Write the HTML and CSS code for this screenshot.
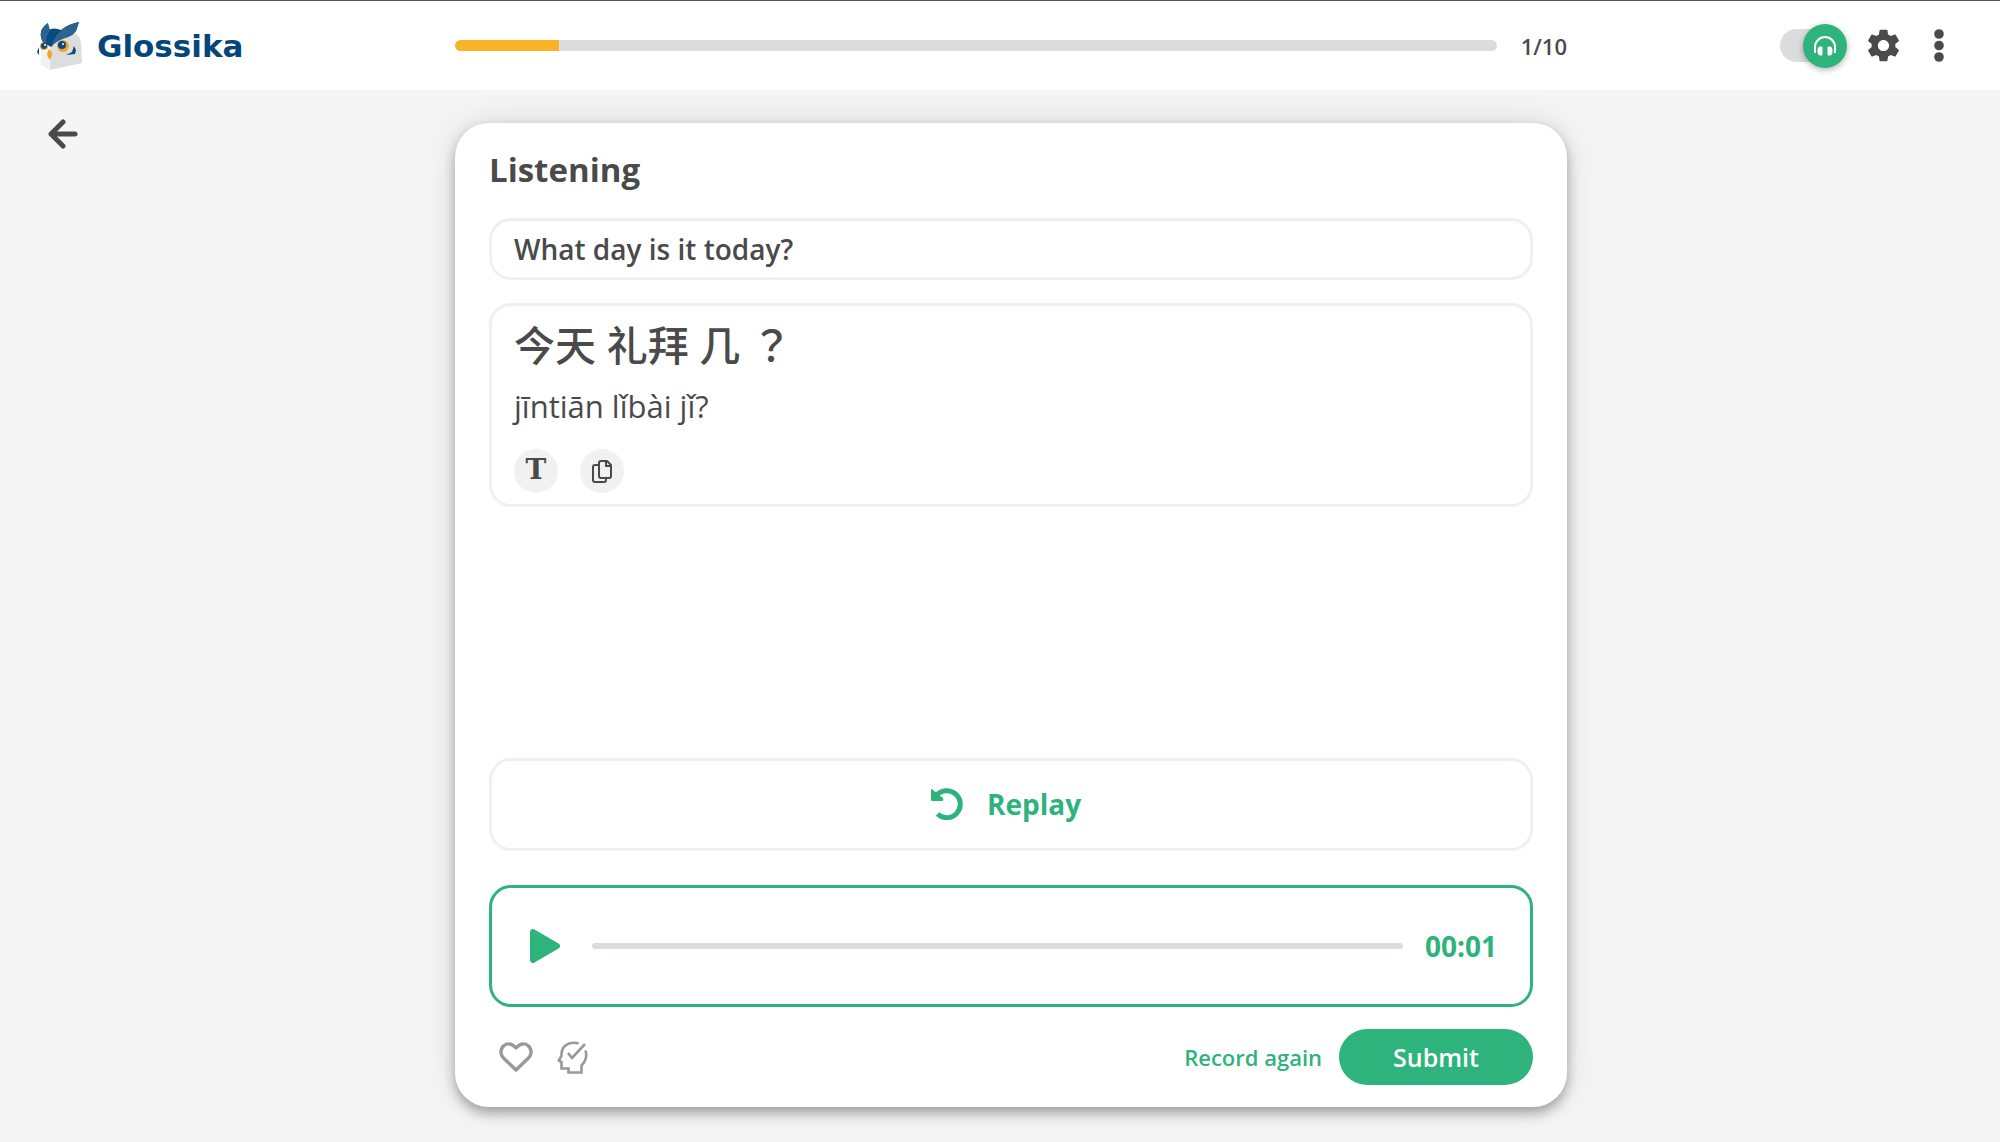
FILE: index.html
```html
<!DOCTYPE html>
<html lang="en">
<head>
<meta charset="utf-8">
<meta name="viewport" content="width=device-width, initial-scale=1">
<title>Glossika</title>
<link rel="stylesheet" href="styles.css">
</head>
<body>
<header class="topbar">
  <a class="brand" href="#" aria-label="Glossika">
    <svg class="brand-owl" viewBox="0 0 46 50" aria-hidden="true">
      <path d="M4 24 L14 12 L38 12 Q43 15 44 22 L45 42 L13 49 L4 43 Z" fill="#dcdede"/>
      <path d="M4 24 L14 22 L13 49 L4 43 Z" fill="#f1f2f2"/>
      <path d="M2 26 L0 31 L2 34 Z M37 25 L35 31 L29 34 L38 33 L39 29 Z" fill="#0b4a7e"/>
      <circle cx="7" cy="25" r="4" fill="#f4a724"/>
      <circle cx="7" cy="25" r="3" fill="#0b4a7e"/>
      <circle cx="26" cy="25" r="6" fill="#f4a724"/>
      <circle cx="25" cy="24" r="4" fill="#0b4a7e"/>
      <circle cx="26" cy="23" r="1" fill="#fff"/>
      <circle cx="8" cy="24" r="1" fill="#fff"/>
      <path d="M12 28 Q16 31 15 34 L13 39 Q10 36 10 33 Z" fill="#f4a724"/>
      <path d="M11 2 Q5 6 4 11 Q3 16 6 21 L14 26 Q19 19 31 16 Q36 14 39 10 L42 1 Q31 3 24 9 Q17 6 11 9 Z" fill="#0b4a7e"/>
      <path d="M42 1 L39 10 Q36 14 31 16 Q20 19 14 26 Q19 11 29 6 Q35 3 42 1 Z" fill="#2d6390"/>
      <path d="M11 2 Q5 6 4 11 Q3 16 6 21 L9 23 Q9 15 13 9 Z" fill="#2d6390"/>
    </svg>
    <span class="brand-name">Glossika</span>
  </a>
  <div class="progress-row">
    <progress class="lesson-progress" value="1" max="10" aria-label="Lesson progress"></progress>
    <span class="progress-count">1/10</span>
  </div>
  <div class="tools">
    <label class="mode-switch" aria-label="Listening mode">
      <input type="checkbox" role="switch" checked>
      <span class="mode-knob">
        <svg viewBox="0 0 22 20" width="22" height="20" aria-hidden="true">
          <path d="M1 17 V11 A10 10 0 0 1 21 11 V17" fill="none" stroke="#fff" stroke-width="2"/>
          <path d="M8 11 V19 H6 Q4 19 4 16 V14 Q4 11 6 11 Z M14 11 V19 H16 Q18 19 18 16 V14 Q18 11 16 11 Z" fill="#fff" stroke="#fff"/>
        </svg>
      </span>
    </label>
    <button class="icon-button" type="button" aria-label="Settings">
      <svg viewBox="2 2 20 20" width="33" height="33" aria-hidden="true"><path fill="currentColor" d="M19.14 12.94c.04-.3.06-.61.06-.94 0-.32-.02-.64-.07-.94l2.03-1.58c.18-.14.23-.41.12-.61l-1.92-3.32c-.12-.22-.37-.29-.59-.22l-2.39.96c-.5-.38-1.03-.7-1.62-.94l-.36-2.54c-.04-.24-.24-.41-.48-.41h-3.84c-.24 0-.43.17-.47.41l-.36 2.54c-.59.24-1.13.57-1.62.94l-2.39-.96c-.22-.08-.47 0-.59.22L2.74 8.87c-.12.21-.08.47.12.61l2.03 1.58c-.05.3-.09.63-.09.94s.02.64.07.94l-2.03 1.58c-.18.14-.23.41-.12.61l1.92 3.32c.12.22.37.29.59.22l2.39-.96c.5.38 1.03.7 1.62.94l.36 2.54c.05.24.24.41.48.41h3.84c.24 0 .44-.17.47-.41l.36-2.54c.59-.24 1.13-.56 1.62-.94l2.39.96c.22.08.47 0 .59-.22l1.92-3.32c.12-.22.07-.47-.12-.61l-2.01-1.58zM12 15.4c-1.9 0-3.4-1.5-3.4-3.4s1.5-3.4 3.4-3.4 3.4 1.5 3.4 3.4-1.5 3.4-3.4 3.4z"/></svg>
    </button>
    <button class="icon-button" type="button" aria-label="More options">
      <svg viewBox="0 0 10 33" width="10" height="33" fill="currentColor" aria-hidden="true"><circle cx="5" cy="5" r="4.8"/><circle cx="5" cy="16.5" r="4.8"/><circle cx="5" cy="28" r="4.8"/></svg>
    </button>
  </div>
</header>

<main class="stage">
  <a class="back" href="#" aria-label="Back">
    <svg viewBox="0 0 30 30" width="30" height="30" fill="none" stroke="currentColor" stroke-width="5" stroke-linecap="round" stroke-linejoin="round" aria-hidden="true"><path d="M15 3 L3 15 L15 27"/><path d="M4 15 H27"/></svg>
  </a>
  <section class="card">
    <h1 class="card-title">Listening</h1>
    <p class="panel source">What day is it today?</p>
    <div class="panel target">
      <p class="hanzi" lang="zh-Hans">今天 礼拜 几 <span class="mark" lang="zh-Hant">？</span></p>
      <p class="pinyin">jīntiān lǐbài jǐ?</p>
      <div class="target-actions">
        <button class="round-button" type="button" aria-label="Text display"><span class="letter">T</span></button>
        <button class="round-button" type="button" aria-label="Copy">
          <svg viewBox="0 0 20 23" width="20" height="23" fill="none" stroke="currentColor" stroke-width="2" stroke-linejoin="round" aria-hidden="true"><path d="M9 1 H15 L19 5 V16 Q19 18 17 18 H9 Q7 18 7 16 V3 Q7 1 9 1 Z"/><path d="M14 1 V6 H19"/><path d="M7 5 H3 Q1 5 1 7 V20 Q1 22 3 22 H12 Q14 22 14 20 V18"/></svg>
        </button>
      </div>
    </div>
    <button class="panel replay" type="button">
      <svg viewBox="0 0 32 33" width="32" height="33" aria-hidden="true"><path d="M5 9 A13.500 13.500 0 1 1 6.500 27" fill="none" stroke="currentColor" stroke-width="5"/><path d="M0 3 Q0 1 2 3 L12 11 Q13 14 11 14 H1 Q0 14 0 13 Z" fill="currentColor"/></svg>
      Replay
    </button>
    <div class="panel player">
      <button class="play" type="button" aria-label="Play recording">
        <svg viewBox="0 0 30 34" width="30" height="34" aria-hidden="true"><path d="M3 3 L27 17 L3 31 Z" fill="currentColor" stroke="currentColor" stroke-width="6" stroke-linejoin="round"/></svg>
      </button>
      <input class="seek" type="range" min="0" max="100" value="0" aria-label="Recording position">
      <time class="duration">00:01</time>
    </div>
    <footer class="card-footer">
      <div class="marks">
        <button class="icon-button" type="button" aria-label="Favourite">
          <svg viewBox="0 0 34 30" width="34" height="30" fill="none" stroke="currentColor" stroke-width="3.400" stroke-linejoin="round" aria-hidden="true"><path d="M17 6 C12 0 7 2 5 3.500 C1 7 1 12.500 4.500 16 L17 28 L29.500 16 C33 12.500 33 7 29 3.500 C27 2 22 0 17 6 Z"/></svg>
        </button>
        <button class="icon-button" type="button" aria-label="Mark as known">
          <svg viewBox="0 0 31 33" width="31" height="33" fill="none" stroke="currentColor" stroke-width="2.600" aria-hidden="true"><path d="M21.500 2.500 Q17 1 12 2.500 Q4 5.500 4.500 15 L1.800 19.500 L4.500 21 V27.500 H11.500 V31.500 H24.500 V24.500 Q31 18 28.500 9.500"/><path d="M11 12 L15 17 L28 3"/></svg>
        </button>
      </div>
      <div class="actions">
        <button class="text-button" type="button">Record again</button>
        <button class="submit" type="submit">Submit</button>
      </div>
    </footer>
  </section>
</main>
</body>
</html>
```
FILE: styles.css
```css
:root {
  --green: #2fb37d;
  --ink: #4a4a4a;
  --line: #f0f0f0;
  --track: #dbdddc;
  --columns: minmax(0, 1fr) minmax(0, 1112px) minmax(0, 1fr);
}

* {
  box-sizing: border-box;
}

body {
  display: flex;
  flex-direction: column;
  min-height: 100vh;
  margin: 0;
  background: #f5f5f5;
  color: var(--ink);
  font-family: "Open Sans", "Noto Sans CJK SC", sans-serif;
}

h1,
p {
  margin: 0;
}

button {
  padding: 0;
  border: 0;
  background: none;
  color: inherit;
  font: inherit;
  cursor: pointer;
}

svg {
  display: block;
}

.topbar {
  display: grid;
  grid-template-columns: var(--columns);
  align-items: center;
  height: 90px;
  padding-left: 22px;
  border-top: 1px solid #55535a;
  background: #fff;
}

.brand {
  display: flex;
  align-items: center;
  gap: 14px;
  padding-left: 15px;
  color: #04467b;
  text-decoration: none;
}

.brand-owl {
  width: 46px;
  height: 50px;
}

.brand-name {
  font: 700 31px/40px "DejaVu Sans", sans-serif;
}

.progress-row {
  display: flex;
  align-items: center;
  gap: 24px;
}

.lesson-progress {
  flex: 1;
  min-width: 0;
  height: 11px;
  appearance: none;
  border: 0;
  border-radius: 6px;
  background: var(--track);
  overflow: hidden;
}

.lesson-progress::-webkit-progress-bar {
  background: var(--track);
}

.lesson-progress::-webkit-progress-value {
  border-radius: 6px 0 0 6px;
  background: #f9b326;
}

.progress-count {
  font-size: 22px;
  font-weight: 600;
  line-height: 32px;
}

.tools {
  display: flex;
  align-items: center;
  justify-content: flex-end;
  gap: 34px;
  padding-right: 56px;
}

.mode-switch {
  display: flex;
  align-items: center;
  justify-content: flex-end;
  width: 67px;
  height: 33px;
  margin-right: -14px;
  border-radius: 17px;
  background: linear-gradient(to right, var(--track) 48px, transparent 48px);
  cursor: pointer;
}

.mode-switch input {
  width: 0;
  height: 0;
  margin: 0;
  appearance: none;
}

.mode-knob {
  display: grid;
  place-items: center;
  width: 44px;
  height: 44px;
  border-radius: 50%;
  background: var(--green);
  box-shadow: 0 2px 6px rgba(0, 0, 0, 0.3);
}

.stage {
  display: grid;
  flex: 1;
  grid-template-columns: var(--columns);
  padding: 33px 0 35px 22px;
}

.back {
  justify-self: start;
  align-self: start;
  margin-top: -4px;
  margin-left: 26px;
  color: var(--ink);
}

.card {
  display: flex;
  flex-direction: column;
  padding: 24px 34px 22px;
  border-radius: 34px;
  background: #fff;
  box-shadow: 0 6px 12px rgba(0, 0, 0, 0.3), 0 0 34px rgba(0, 0, 0, 0.12);
}

.card-title {
  margin-bottom: 25px;
  font-size: 33px;
  font-weight: 700;
  line-height: 46px;
}

.panel {
  border: 3px solid var(--line);
  border-radius: 22px;
}

.source {
  margin-bottom: 23px;
  padding: 9px 22px;
  font-size: 28px;
  font-weight: 600;
  line-height: 38px;
}

.target {
  margin-bottom: 34px;
  padding: 9px 22px 11px;
}

.hanzi {
  margin-bottom: 11px;
  font-size: 41px;
  font-weight: 500;
  line-height: 56px;
}

.mark {
  font-family: "Noto Sans CJK TC", sans-serif;
}

.pinyin {
  margin-bottom: 21px;
  font-size: 31px;
  line-height: 44px;
}

.target-actions {
  display: flex;
  gap: 22px;
}

.round-button {
  display: grid;
  place-items: center;
  width: 44px;
  height: 44px;
  border-radius: 50%;
  background: #f1f1f1;
}

.letter {
  padding-bottom: 2px;
  font: 700 28px/40px "DejaVu Serif", serif;
}

.replay {
  display: flex;
  align-items: center;
  justify-content: center;
  gap: 24px;
  min-height: 93px;
  margin-top: auto;
  margin-bottom: 34px;
  padding: 0 10px 2px 0;
  color: var(--green);
  font-size: 28px;
  font-weight: 700;
}

.player {
  display: flex;
  align-items: center;
  gap: 22px;
  height: 122px;
  margin-bottom: 22px;
  padding: 0 33px 0 38px;
  border-color: var(--green);
  color: var(--green);
}

.play {
  margin-right: 10px;
}

.seek {
  flex: 1;
  min-width: 0;
  height: 6px;
  margin: 0;
  appearance: none;
  border-radius: 3px;
  background: var(--track);
}

.seek::-webkit-slider-thumb {
  width: 0;
  height: 0;
  appearance: none;
}

.duration {
  font-size: 28px;
  font-weight: 700;
  line-height: 38px;
}

.card-footer,
.marks,
.actions {
  display: flex;
  align-items: center;
}

.card-footer {
  justify-content: space-between;
}

.marks {
  gap: 24px;
  padding-left: 10px;
  color: #999;
}

.actions {
  gap: 17px;
}

.text-button {
  color: var(--green);
  font-size: 22px;
  font-weight: 600;
}

.submit {
  width: 194px;
  height: 56px;
  border-radius: 28px;
  background: var(--green);
  color: #fff;
  font-size: 25px;
  font-weight: 600;
}
```
